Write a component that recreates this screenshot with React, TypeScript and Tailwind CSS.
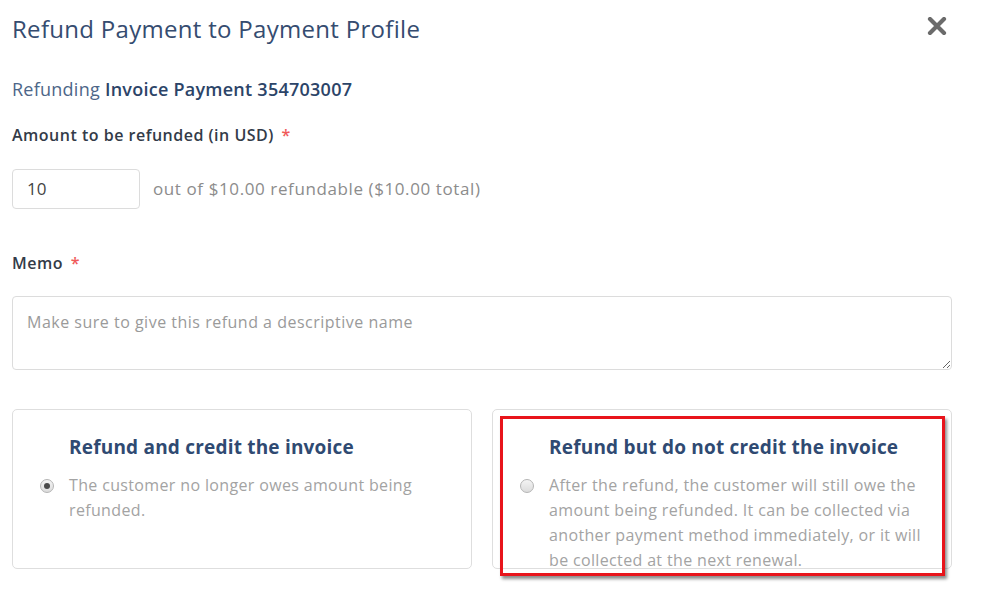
import React from "react";

function Radio({ checked }: { checked?: boolean }) {
  return (
    <div className="mt-[6px] flex h-[14px] w-[14px] shrink-0 items-center justify-center rounded-full border border-[#b5b5b5] bg-gradient-to-b from-[#f4f4f4] to-[#dcdcdc]">
      {checked && <div className="h-[6px] w-[6px] rounded-full bg-[#4a4a4a]" />}
    </div>
  );
}

function OptionCard({
  title,
  text,
  checked,
  highlight,
}: {
  title: string;
  text: string;
  checked?: boolean;
  highlight?: boolean;
}) {
  return (
    <div className="relative h-[160px] rounded-[5px] border border-[#dedede] bg-white pl-[27px] pt-[24px]">
      <div className="pl-[29px] text-[19px] font-bold leading-[26px] tracking-[0.2px] text-[#2f4a72]">{title}</div>
      <div className="mt-[13px] flex gap-[15px]">
        <Radio checked={checked} />
        <p className="w-[376px] text-[16px] leading-[25px] tracking-[0.35px] text-[#a3a3a3]">{text}</p>
      </div>
      {highlight && (
        <div className="pointer-events-none absolute left-[7px] right-[6px] top-[6px] bottom-[-8px] border-[3px] border-[#e8141b] shadow-[2px_3px_3px_rgba(0,0,0,0.45)]" />
      )}
    </div>
  );
}

export default function App() {
  return (
    <div
      className="h-[606px] w-[981px] overflow-hidden bg-white"
      style={{ fontFamily: '"Open Sans", "Liberation Sans", sans-serif' }}
    >
      <div className="w-[952px] pl-[12px] pt-[13px]">
        <div className="flex h-[32px] items-center justify-between">
          <h1 className="text-[24px] leading-[32px] tracking-[0.3px] text-[#354c70]">Refund Payment to Payment Profile</h1>
          <svg width="20" height="18" viewBox="0 0 20 18" className="mr-[5px] mt-[-6px]">
            <path d="M3 2 L17 16 M17 2 L3 16" stroke="#6b6b6b" strokeWidth="4.2" strokeLinecap="round" />
          </svg>
        </div>

        <div className="mt-[32px] text-[18px] leading-[24px] tracking-[0.25px] text-[#4d6688]">
          Refunding <span className="font-semibold text-[#2c4468]">Invoice Payment 354703007</span>
        </div>

        <div className="mt-[23px] text-[16px] font-semibold leading-[22px] tracking-[0.5px] text-[#333b48]">
          Amount to be refunded (in USD) <span className="ml-[3px] text-[#f05a5a]">*</span>
        </div>

        <div className="mt-[23px] flex items-center">
          <div className="flex h-[40px] w-[128px] items-center rounded-[4px] border border-[#dcdcdc] pl-[14px] text-[17px] text-[#444]">
            10
          </div>
          <span className="ml-[13px] text-[17px] tracking-[0.6px] text-[#8c8c8c]">out of $10.00 refundable ($10.00 total)</span>
        </div>

        <div className="mt-[43px] text-[16px] font-semibold leading-[22px] tracking-[0.5px] text-[#333b48]">
          Memo <span className="ml-[3px] text-[#f05a5a]">*</span>
        </div>

        <textarea
          className="mt-[22px] block h-[74px] w-[940px] rounded-[4px] border border-[#dcdcdc] px-[14px] pt-[14px] text-[16px] leading-[22px] tracking-[0.5px] text-[#444] placeholder:text-[#9a9a9a] outline-none"
          placeholder="Make sure to give this refund a descriptive name"
        />

        <div className="mt-[39px] grid grid-cols-2 gap-[20px]">
          <OptionCard
            title="Refund and credit the invoice"
            text="The customer no longer owes amount being refunded."
            checked
          />
          <OptionCard
            title="Refund but do not credit the invoice"
            text="After the refund, the customer will still owe the amount being refunded. It can be collected via another payment method immediately, or it will be collected at the next renewal."
            highlight
          />
        </div>
      </div>
    </div>
  );
}
